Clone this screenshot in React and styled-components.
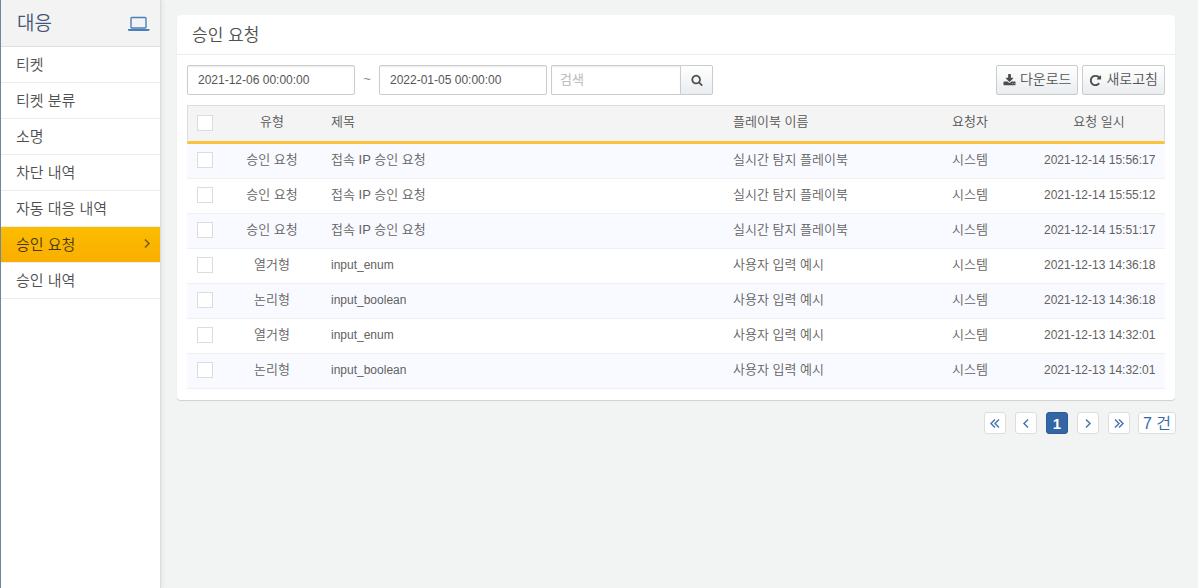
import React, { useState } from 'react';
import styled, { createGlobalStyle, ThemeProvider } from 'styled-components';

const theme = {
  page: '#f2f4f4',
  panel: '#f4f4f4',
  line: '#ececec',
  border: '#cccccc',
  text: '#555555',
  blue: '#3266a5',
  yellow: '#fbc23c',
  fontSize: {
    s: '12px',
    m: '13px',
    l: '15px',
    xl: '17px',
    xxl: '19px',
  },
};

const GlobalStyle = createGlobalStyle`
  *, *::before, *::after {
    box-sizing: border-box;
  }
  body {
    margin: 0;
    background: ${theme.page};
    color: ${theme.text};
    font-family: "Liberation Sans", "Noto Sans CJK KR", sans-serif;
    font-size: ${theme.fontSize.m};
    font-weight: 350;
  }
  button, input {
    font-family: inherit;
    font-weight: inherit;
    color: inherit;
  }
`;

const StyledPage = styled.div`
  display: flex;
  min-height: 100vh;
`;

const StyledSidebar = styled.aside`
  flex: 0 0 161px;
  background: #fff;
  border-left: 1px solid #6c87a3;
  border-right: 1px solid #dcdcdc;
  box-shadow: 2px 0 4px rgba(0, 0, 0, 0.06);
`;

const StyledSidebarHeader = styled.header`
  display: flex;
  align-items: center;
  justify-content: space-between;
  height: 47px;
  padding: 0 10px 3px 16px;
  background: #f3f3f3;
  border-bottom: 1px solid #dedede;
`;

const StyledSidebarTitle = styled.h2`
  margin: 0;
  font-size: ${({ theme }) => theme.fontSize.xxl};
  font-weight: inherit;
  color: #43567a;
`;

const StyledLaptop = styled.span`
  display: flex;
  padding-top: 4px;
`;

const StyledMenu = styled.ul`
  margin: 0;
  padding: 0;
  list-style: none;
`;

const StyledMenuLink = styled.a`
  display: flex;
  align-items: center;
  justify-content: space-between;
  height: 36px;
  padding: 0 7px 3px 15px;
  border-bottom: 1px solid ${({ theme }) => theme.line};
  background: ${({ $active }) =>
    $active ? 'linear-gradient(#fbbd00, #faae00)' : '#fff'};
  color: ${({ $active }) => ($active ? '#47391a' : '#505050')};
  font-size: ${({ theme }) => theme.fontSize.l};
  text-decoration: none;
`;

const StyledMain = styled.main`
  flex: 1;
  min-width: 0;
  padding: 15px 23px 15px 16px;
`;

const StyledCard = styled.section`
  padding-bottom: 11px;
  background: #fff;
  border-radius: 4px;
  box-shadow: 0 1px 1px rgba(0, 0, 0, 0.15);
`;

const StyledCardTitle = styled.h1`
  height: 40px;
  margin: 0;
  padding-left: 15px;
  border-bottom: 1px solid ${({ theme }) => theme.line};
  font-size: ${({ theme }) => theme.fontSize.xl};
  font-weight: inherit;
  line-height: 41px;
  color: #505050;
`;

const StyledToolbar = styled.div`
  display: flex;
  align-items: center;
  gap: 4px;
  padding: 10px;
`;

const StyledInput = styled.input`
  width: 168px;
  height: 30px;
  padding: 0 10px;
  border: 1px solid ${({ theme }) => theme.border};
  border-radius: 2px;
  box-shadow: inset 0 1px 1px rgba(0, 0, 0, 0.08);
  font-size: ${({ theme }) => theme.fontSize.s};
  outline: none;
`;

const StyledSearchInput = styled(StyledInput)`
  width: 129px;
  padding: 0 8px 2px;
  border-right: 0;
  border-radius: 2px 0 0 2px;
  font-size: ${({ theme }) => theme.fontSize.m};
  &::placeholder {
    color: #b4b4b4;
  }
`;

const StyledTilde = styled.span`
  width: 16px;
  padding-bottom: 3px;
  color: #888;
  text-align: center;
`;

const StyledSearch = styled.form`
  display: flex;
`;

const StyledButton = styled.button`
  display: flex;
  align-items: center;
  justify-content: center;
  gap: 4px;
  height: 30px;
  padding: 0 6px;
  border: 1px solid ${({ theme }) => theme.border};
  border-radius: 2px;
  background: linear-gradient(#fff, #e9edf0);
  font-size: 14px;
  white-space: nowrap;
  cursor: pointer;
`;

const StyledButtonText = styled.span`
  padding-bottom: 4px;
`;

const StyledSearchButton = styled(StyledButton)`
  width: 33px;
  padding: 0;
  border-radius: 0 2px 2px 0;
`;

const StyledActions = styled.div`
  display: flex;
  gap: 4px;
  margin-left: auto;
`;

const StyledTableCon = styled.div`
  padding: 0 10px;
`;

const StyledTable = styled.table`
  width: 100%;
  border-collapse: separate;
  border-spacing: 0;
  table-layout: fixed;
`;

const StyledCol = styled.col`
  width: ${({ $width }) => $width};
`;

const StyledHead = styled.th`
  height: 39px;
  padding: 0 10px 3px;
  background: ${({ theme }) => theme.panel};
  border-top: 1px solid #dcdcdc;
  border-bottom: 3px solid ${({ theme }) => theme.yellow};
  font-weight: inherit;
  line-height: 18px;
  text-align: ${({ $align }) => $align || 'left'};
  &:first-child {
    padding: 0 0 2px 9px;
    border-left: 1px solid #dcdcdc;
  }
  &:last-child {
    border-right: 1px solid #dcdcdc;
  }
`;

const StyledRow = styled.tr`
  &:nth-child(odd) {
    background: #f9faff;
  }
`;

const StyledCell = styled.td`
  height: 35px;
  padding: 0 10px 3px;
  border-bottom: 1px solid #f0f0f0;
  color: #626262;
  font-size: ${({ $latin, theme }) =>
    $latin ? theme.fontSize.s : theme.fontSize.m};
  line-height: 18px;
  text-align: ${({ $align }) => $align || 'left'};
  white-space: nowrap;
  &:first-child {
    padding: 0 0 2px 10px;
  }
`;

const StyledCheckbox = styled.input`
  display: block;
  appearance: none;
  width: 16px;
  height: 16px;
  margin: 0;
  border: 1px solid #dcdcdc;
  background: #fff;
  &:checked {
    background: ${({ theme }) => theme.blue};
    box-shadow: inset 0 0 0 2px #fff;
  }
`;

const StyledPager = styled.nav`
  display: flex;
  justify-content: flex-end;
  gap: 9px;
  margin-top: 12px;
`;

const StyledPageButton = styled.button`
  display: flex;
  align-items: center;
  justify-content: center;
  width: 22px;
  height: 22px;
  padding: 0;
  border: 1px solid ${({ $active }) => ($active ? '#2c5b95' : '#dddddd')};
  border-radius: 3px;
  background: ${({ $active, theme }) => ($active ? theme.blue : '#fff')};
  color: ${({ $active, theme }) => ($active ? '#fff' : theme.blue)};
  font-size: ${({ theme }) => theme.fontSize.l};
  font-weight: ${({ $active }) => ($active ? 'bold' : 'inherit')};
  cursor: pointer;
`;

const StyledTotal = styled.span`
  height: 22px;
  margin: 0 -1px;
  padding: 0 4px;
  border: 1px solid #dddddd;
  border-radius: 3px;
  background: #fff;
  color: ${({ theme }) => theme.blue};
  font-size: 16px;
  line-height: 22px;
  white-space: nowrap;
`;

const menu = [
  '티켓',
  '티켓 분류',
  '소명',
  '차단 내역',
  '자동 대응 내역',
  '승인 요청',
  '승인 내역',
];

const access = ['승인 요청', '접속 IP 승인 요청', '실시간 탐지 플레이북'];
const enumInput = ['열거형', 'input_enum', '사용자 입력 예시'];
const booleanInput = ['논리형', 'input_boolean', '사용자 입력 예시'];

const rows = [
  [...access, '2021-12-14 15:56:17'],
  [...access, '2021-12-14 15:55:12'],
  [...access, '2021-12-14 15:51:17'],
  [...enumInput, '2021-12-13 14:36:18'],
  [...booleanInput, '2021-12-13 14:36:18'],
  [...enumInput, '2021-12-13 14:32:01'],
  [...booleanInput, '2021-12-13 14:32:01'],
];

const icons = {
  search:
    'M1216 832q0-185-131.5-316.5t-316.5-131.5-316.5 131.5-131.5 316.5 131.5 316.5 316.5 131.5 316.5-131.5 131.5-316.5zm512 832q0 52-38 90t-90 38q-54 0-90-38l-343-342q-179 124-399 124-143 0-273.5-55.5t-225-150-150-225-55.5-273.5 55.5-273.5 150-225 225-150 273.5-55.5 273.5 55.5 225 150 150 225 55.5 273.5q0 220-124 399l343 343q37 37 37 90z',
  download:
    'M1344 1344q0-26-19-45t-45-19-45 19-19 45 19 45 45 19 45-19 19-45zm256 0q0-26-19-45t-45-19-45 19-19 45 19 45 45 19 45-19 19-45zm128-224v320q0 40-28 68t-68 28h-1472q-40 0-68-28t-28-68v-320q0-40 28-68t68-28h465l135 136q58 56 136 56t136-56l136-136h464q40 0 68 28t28 68zm-325-569q17 41-14 70l-448 448q-18 19-45 19t-45-19l-448-448q-31-29-14-70 17-39 59-39h256v-448q0-26 19-45t45-19h256q26 0 45 19t19 45v448h256q42 0 59 39z',
  refresh:
    'M1664 256v448q0 26-19 45t-45 19h-448q-42 0-59-40-17-39 14-69l138-138q-148-137-349-137-104 0-198.5 40.5t-163.5 109.5-109.5 163.5-40.5 198.5 40.5 198.5 109.5 163.5 163.5 109.5 198.5 40.5q119 0 225-52t179-147q7-10 23-12 15 0 25 9l137 138q9 8 9.5 20.5t-7.5 22.5q-109 132-264 204.5t-327 72.5q-156 0-298-61t-245-164-164-245-61-298 61-298 164-245 245-164 298-61q147 0 284.5 55.5t244.5 156.5l130-129q29-31 70-14 39 17 39 59z',
};

const Icon = ({ name, size = 13 }) => (
  <svg
    width={size}
    height={size}
    viewBox="0 0 1792 1792"
    fill="#4c4c4c"
    aria-hidden="true"
  >
    <path d={icons[name]} />
  </svg>
);

const angles = {
  first: 'M6 2.5L2 6.5l4 4M10 2.5L6 6.5l4 4',
  prev: 'M8 2.5L4 6.5l4 4',
  next: 'M4 2.5l4 4-4 4',
  last: 'M2 2.5l4 4-4 4M6 2.5l4 4-4 4',
};

const Angle = ({ name, color = '#4a76ae' }) => (
  <svg width="12" height="12" viewBox="0 0 12 12" aria-hidden="true">
    <path d={angles[name]} fill="none" stroke={color} strokeWidth="1.5" />
  </svg>
);

const Laptop = () => (
  <svg width="22" height="16" viewBox="0 0 22 16" aria-hidden="true">
    <rect
      x="3"
      y="1.5"
      width="15"
      height="10.5"
      rx="1"
      fill="none"
      stroke="#4a7fb9"
      strokeWidth="1.4"
    />
    <path d="M0 13h21.5v1q0 1-1.5 1H1.5Q0 15 0 14z" fill="#4a7fb9" />
  </svg>
);

const Sidebar = () => (
  <StyledSidebar>
    <StyledSidebarHeader>
      <StyledSidebarTitle>대응</StyledSidebarTitle>
      <StyledLaptop>
        <Laptop />
      </StyledLaptop>
    </StyledSidebarHeader>
    <StyledMenu>
      {menu.map((name) => (
        <li key={name}>
          <StyledMenuLink href="#" $active={name === '승인 요청'}>
            {name}
            {name === '승인 요청' && <Angle name="next" color="#7a5804" />}
          </StyledMenuLink>
        </li>
      ))}
    </StyledMenu>
  </StyledSidebar>
);

const Toolbar = () => {
  const [from, setFrom] = useState('2021-12-06 00:00:00');
  const [to, setTo] = useState('2022-01-05 00:00:00');

  return (
    <StyledToolbar>
      <StyledInput
        aria-label="시작 일시"
        value={from}
        onChange={(e) => setFrom(e.target.value)}
      />
      <StyledTilde>~</StyledTilde>
      <StyledInput
        aria-label="종료 일시"
        value={to}
        onChange={(e) => setTo(e.target.value)}
      />
      <StyledSearch onSubmit={(e) => e.preventDefault()}>
        <StyledSearchInput aria-label="검색" placeholder="검색" />
        <StyledSearchButton aria-label="검색">
          <Icon name="search" size={12} />
        </StyledSearchButton>
      </StyledSearch>
      <StyledActions>
        <StyledButton type="button">
          <Icon name="download" />
          <StyledButtonText>다운로드</StyledButtonText>
        </StyledButton>
        <StyledButton type="button">
          <Icon name="refresh" />
          <StyledButtonText>새로고침</StyledButtonText>
        </StyledButton>
      </StyledActions>
    </StyledToolbar>
  );
};

const RequestTable = () => {
  const [checked, setChecked] = useState([]);
  const toggle = (i) =>
    setChecked(
      checked.includes(i) ? checked.filter((c) => c !== i) : [...checked, i]
    );

  return (
    <StyledTable>
      <colgroup>
        <StyledCol $width="36px" />
        <StyledCol $width="98px" />
        <StyledCol />
        <StyledCol $width="183px" />
        <StyledCol $width="128px" />
        <StyledCol $width="131px" />
      </colgroup>
      <thead>
        <tr>
          <StyledHead>
            <StyledCheckbox
              type="checkbox"
              aria-label="전체 선택"
              checked={checked.length === rows.length}
              onChange={(e) =>
                setChecked(e.target.checked ? rows.map((_, i) => i) : [])
              }
            />
          </StyledHead>
          <StyledHead $align="center">유형</StyledHead>
          <StyledHead>제목</StyledHead>
          <StyledHead>플레이북 이름</StyledHead>
          <StyledHead $align="center">요청자</StyledHead>
          <StyledHead $align="center">요청 일시</StyledHead>
        </tr>
      </thead>
      <tbody>
        {rows.map(([type, title, playbook, date], i) => (
          <StyledRow key={i}>
            <StyledCell>
              <StyledCheckbox
                type="checkbox"
                aria-label={`${title} 선택`}
                checked={checked.includes(i)}
                onChange={() => toggle(i)}
              />
            </StyledCell>
            <StyledCell $align="center">{type}</StyledCell>
            <StyledCell $latin={title.startsWith('input')}>{title}</StyledCell>
            <StyledCell>{playbook}</StyledCell>
            <StyledCell $align="center">시스템</StyledCell>
            <StyledCell $latin $align="center">
              {date}
            </StyledCell>
          </StyledRow>
        ))}
      </tbody>
    </StyledTable>
  );
};

const Pager = () => (
  <StyledPager aria-label="페이지">
    <StyledPageButton aria-label="처음">
      <Angle name="first" />
    </StyledPageButton>
    <StyledPageButton aria-label="이전">
      <Angle name="prev" />
    </StyledPageButton>
    <StyledPageButton $active>1</StyledPageButton>
    <StyledPageButton aria-label="다음">
      <Angle name="next" />
    </StyledPageButton>
    <StyledPageButton aria-label="마지막">
      <Angle name="last" />
    </StyledPageButton>
    <StyledTotal>7 건</StyledTotal>
  </StyledPager>
);

const App = () => {
  return (
    <ThemeProvider theme={theme}>
      <GlobalStyle />
      <StyledPage>
        <Sidebar />
        <StyledMain>
          <StyledCard>
            <StyledCardTitle>승인 요청</StyledCardTitle>
            <Toolbar />
            <StyledTableCon>
              <RequestTable />
            </StyledTableCon>
          </StyledCard>
          <Pager />
        </StyledMain>
      </StyledPage>
    </ThemeProvider>
  );
};

export default App;
